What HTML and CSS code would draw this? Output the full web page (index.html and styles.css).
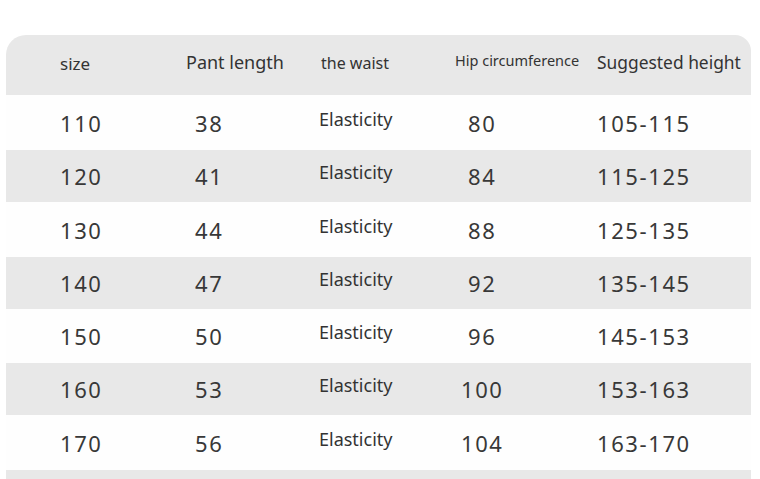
FILE: index.html
```html
<!DOCTYPE html>
<html>
<head>
<meta charset="utf-8">
<link rel="stylesheet" href="styles.css">
</head>
<body>
<div class="chart">
  <div class="row head">
    <div class="c c1 h-size">size</div>
    <div class="c c2 h-pant">Pant length</div>
    <div class="c c3 h-waist">the waist</div>
    <div class="c c4 h-hip">Hip circumference</div>
    <div class="c c5 h-height">Suggested height</div>
  </div>
  <div class="row white r55">
    <div class="c c1 num">110</div><div class="c c2 num">38</div><div class="c c3 el">Elasticity</div><div class="c c4 num">80</div><div class="c c5 num">105-115</div>
  </div>
  <div class="row gray">
    <div class="c c1 num">120</div><div class="c c2 num">41</div><div class="c c3 el">Elasticity</div><div class="c c4 num">84</div><div class="c c5 num">115-125</div>
  </div>
  <div class="row white r55">
    <div class="c c1 num">130</div><div class="c c2 num">44</div><div class="c c3 el">Elasticity</div><div class="c c4 num">88</div><div class="c c5 num">125-135</div>
  </div>
  <div class="row gray">
    <div class="c c1 num">140</div><div class="c c2 num">47</div><div class="c c3 el">Elasticity</div><div class="c c4 num">92</div><div class="c c5 num">135-145</div>
  </div>
  <div class="row white r54">
    <div class="c c1 num">150</div><div class="c c2 num">50</div><div class="c c3 el">Elasticity</div><div class="c c4 num">96</div><div class="c c5 num">145-153</div>
  </div>
  <div class="row gray">
    <div class="c c1 num">160</div><div class="c c2 num">53</div><div class="c c3 el">Elasticity</div><div class="c c4 num n3">100</div><div class="c c5 num">153-163</div>
  </div>
  <div class="row white r55">
    <div class="c c1 num">170</div><div class="c c2 num">56</div><div class="c c3 el">Elasticity</div><div class="c c4 num n3">104</div><div class="c c5 num">163-170</div>
  </div>
  <div class="row gray last"></div>
</div>
</body>
</html>
```
FILE: styles.css
```css
html, body {
  margin: 0;
  padding: 0;
  background: #ffffff;
  overflow: hidden;
}
body {
  width: 760px;
  height: 479px;
  font-family: "Noto Sans", "DejaVu Sans", sans-serif;
  color: #333333;
}
.chart {
  margin: 35px 9px 0 6px;
  display: flex;
  flex-direction: column;
}
.row {
  display: grid;
  grid-template-columns: 126px 133px 136px 142px 1fr;
  align-items: center;
  padding-left: 54px;
}
.head {
  height: 60px;
  background: #e8e8e8;
  border-radius: 20px 16px 0 0;
}
.white { background: #fefefe; }
.gray { background: #e8e8e8; height: 52px; }
.gray.last { height: 9px; }
.r55 { height: 55px; }
.r54 { height: 54px; }
.c { white-space: nowrap; }
.h-size { font-size: 17px; margin-top: -4px; }
.h-pant { font-size: 18px; margin-top: -7px; }
.h-waist { font-size: 16px; padding-left: 2px; margin-top: -4px; }
.h-hip { font-size: 14.5px; margin-top: -10px; }
.h-height { font-size: 17.4px; margin-top: -6px; }
.num {
  font-size: 22px;
  letter-spacing: 1.6px;
  color: #383838;
}
.c2.num { padding-left: 9px; }
.c4.num { padding-left: 13px; }
.c4.n3 { padding-left: 6px; }
.el {
  font-size: 18px;
  color: #333333;
  margin-top: -8px;
}
```
